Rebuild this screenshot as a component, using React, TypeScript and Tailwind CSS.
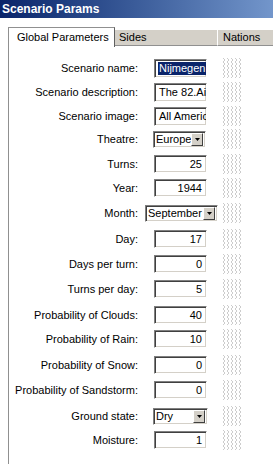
import React from "react";

const font = { fontFamily: '"Liberation Sans", Arial, sans-serif' };

function Gripper() {
  const lines = [0, 4, 8, 12, 16];
  return (
    <svg width="22" height="20" viewBox="0 0 22 20" className="block">
      {lines.map((x) => (
        <polyline
          key={x}
          points={`${x + 1},0 ${x + 3},2 ${x + 1},4 ${x + 3},6 ${x + 1},8 ${x + 3},10 ${x + 1},12 ${x + 3},14 ${x + 1},16 ${x + 3},18 ${x + 1},20`}
          fill="none"
          stroke="#cccccc"
          strokeWidth="1"
        />
      ))}
    </svg>
  );
}

function Sunken({ className, children }: { className: string; children: React.ReactNode }) {
  return (
    <div
      className={`border border-t-[#808080] border-l-[#808080] border-r-white border-b-white shadow-[inset_1px_1px_0_#404040,inset_-1px_-1px_0_#d4d0c8] bg-white flex items-center ${className}`}
    >
      {children}
    </div>
  );
}

function TextField({ value, selected }: { value: string; selected?: boolean }) {
  return (
    <Sunken className="ml-[16px] w-[53px] h-[19px] pl-[3px] overflow-hidden">
      <span
        className={`whitespace-nowrap text-[11px] leading-[13px] px-[1px] ${selected ? "bg-[#0a246a] text-white" : "text-black"}`}
      >
        {value}
      </span>
    </Sunken>
  );
}

function NumField({ value }: { value: string }) {
  return (
    <Sunken className="ml-[16px] w-[53px] h-[18px] justify-end pr-[4px]">
      <span className="text-[11px] leading-[13px] text-black">{value}</span>
    </Sunken>
  );
}

function Select({ value, w, ml }: { value: string; w: string; ml: string }) {
  return (
    <Sunken className={`${ml} ${w} h-[17px] pl-[2px] pr-[2px] justify-between`}>
      <span className="text-[11px] leading-[13px] text-black whitespace-nowrap">{value}</span>
      <div className="w-[12px] h-[13px] bg-[#d4d0c8] border border-t-white border-l-white border-r-[#404040] border-b-[#404040] flex items-center justify-center">
        <svg width="5" height="3" viewBox="0 0 5 3">
          <polygon points="0,0 5,0 2.5,3" fill="#000" />
        </svg>
      </div>
    </Sunken>
  );
}

type Row = { label: string; mt: string; control: React.ReactNode };

const rows: Row[] = [
  { label: "Scenario name:", mt: "mt-0", control: <TextField value="Nijmegen" selected /> },
  { label: "Scenario description:", mt: "mt-[4px]", control: <TextField value="The 82.Air" /> },
  { label: "Scenario image:", mt: "mt-[4px]", control: <TextField value="All America" /> },
  { label: "Theatre:", mt: "mt-[3px]", control: <Select value="Europe" w="w-[53px]" ml="ml-[15px]" /> },
  { label: "Turns:", mt: "mt-[5px]", control: <NumField value="25" /> },
  { label: "Year:", mt: "mt-[4px]", control: <NumField value="1944" /> },
  { label: "Month:", mt: "mt-[5px]", control: <Select value="September" w="w-[73px]" ml="ml-[7px]" /> },
  { label: "Day:", mt: "mt-[6px]", control: <NumField value="17" /> },
  { label: "Days per turn:", mt: "mt-[5px]", control: <NumField value="0" /> },
  { label: "Turns per day:", mt: "mt-[5px]", control: <NumField value="5" /> },
  { label: "Probability of Clouds:", mt: "mt-[6px]", control: <NumField value="40" /> },
  { label: "Probability of Rain:", mt: "mt-[4px]", control: <NumField value="10" /> },
  { label: "Probability of Snow:", mt: "mt-[6px]", control: <NumField value="0" /> },
  { label: "Probability of Sandstorm:", mt: "mt-[5px]", control: <NumField value="0" /> },
  { label: "Ground state:", mt: "mt-[6px]", control: <Select value="Dry" w="w-[55px]" ml="ml-[15px]" /> },
  { label: "Moisture:", mt: "mt-[4px]", control: <NumField value="1" /> },
];

export default function App() {
  return (
    <div className="w-[273px] h-[464px] bg-white overflow-hidden flex flex-col" style={font}>
      <div className="h-[18px] shrink-0 bg-linear-to-r from-[#0a246a] to-[#7396cb] flex items-center pl-[2px]">
        <span className="text-white font-bold text-[12px] leading-[14px]">Scenario Params</span>
      </div>
      <div className="h-[9px] shrink-0" />
      <div className="h-[19px] shrink-0 flex items-end pl-[8px] text-[11px] text-black">
        <div className="w-[107px] h-[20px] bg-white border-l border-t border-r border-l-[#909090] border-t-[#909090] border-r-[#606060] flex items-center pl-[8px] relative z-10 -mb-px">
          Global Parameters
        </div>
        <div className="w-[102px] h-[17px] bg-[#d4d0c8] border-t border-t-white border-b border-b-[#909090] flex items-center pl-[4px]">
          Sides
        </div>
        <div className="flex-1 h-[17px] bg-[#d4d0c8] border-t border-t-white border-l border-l-white border-b border-b-[#909090] flex items-center pl-[5px]">
          Nations
        </div>
      </div>
      <div className="flex-1 ml-[8px] border-l border-l-[#909090] pt-[12px] flex flex-col">
        {rows.map((r) => (
          <div key={r.label} className={`h-[20px] flex items-center shrink-0 ${r.mt}`}>
            <div className="w-[129px] text-right text-[11px] leading-[13px] text-black whitespace-nowrap">
              {r.label}
            </div>
            <div className="w-[84px] flex items-center">{r.control}</div>
            <Gripper />
          </div>
        ))}
      </div>
    </div>
  );
}
